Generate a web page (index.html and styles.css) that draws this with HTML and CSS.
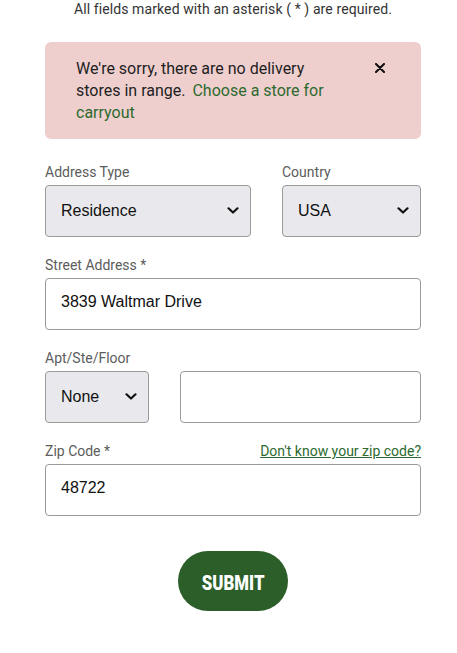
FILE: index.html
```html
<!DOCTYPE html>
<html lang="en">
<head>
<meta charset="utf-8">
<title>Delivery Address</title>
<link rel="stylesheet" href="styles.css">
</head>
<body>
<form class="form">
  <p class="note">All fields marked with an asterisk ( * ) are required.</p>

  <div class="alert">
    <p class="alert-text"><span>We're sorry, there are no delivery stores in range.</span> <a class="alert-link" href="#">Choose a store for carryout</a></p>
    <button type="button" class="alert-close" aria-label="Close">
      <svg width="10" height="10" viewBox="0 0 10 10"><path d="M1 1 L9 9 M9 1 L1 9" stroke="#111" stroke-width="2.1" stroke-linecap="round"/></svg>
    </button>
  </div>

  <div class="row row-60">
    <div class="field">
      <label class="label">Address Type</label>
      <div class="select"><span>Residence</span><svg class="chev" width="12" height="7" viewBox="0 0 12 7"><path d="M1.5 1.3 L6 5.5 L10.5 1.3" fill="none" stroke="#111" stroke-width="2.2" stroke-linecap="round" stroke-linejoin="round"/></svg></div>
    </div>
    <div class="field">
      <label class="label">Country</label>
      <div class="select"><span>USA</span><svg class="chev" width="12" height="7" viewBox="0 0 12 7"><path d="M1.5 1.3 L6 5.5 L10.5 1.3" fill="none" stroke="#111" stroke-width="2.2" stroke-linecap="round" stroke-linejoin="round"/></svg></div>
    </div>
  </div>

  <div class="field">
    <label class="label">Street Address *</label>
    <div class="input">3839 Waltmar Drive</div>
  </div>

  <div class="row row-30">
    <div class="field">
      <label class="label">Apt/Ste/Floor</label>
      <div class="select"><span>None</span><svg class="chev" width="12" height="7" viewBox="0 0 12 7"><path d="M1.5 1.3 L6 5.5 L10.5 1.3" fill="none" stroke="#111" stroke-width="2.2" stroke-linecap="round" stroke-linejoin="round"/></svg></div>
    </div>
    <div class="field">
      <label class="label">&nbsp;</label>
      <div class="input"></div>
    </div>
  </div>

  <div class="field">
    <div class="label-row">
      <label class="label">Zip Code *</label>
      <a class="zip-link" href="#">Don't know your zip code?</a>
    </div>
    <div class="input">48722</div>
  </div>

  <div class="actions">
    <button type="button" class="submit"><span class="submit-text">SUBMIT</span></button>
  </div>
</form>
</body>
</html>
```
FILE: styles.css
```css
* { box-sizing: border-box; }
html, body { margin: 0; padding: 0; background: #fff; }
body { font-family: Roboto, "Noto Sans", sans-serif; color: #222; }

.form {
  width: 376px;
  margin-left: 45px;
  display: flex;
  flex-direction: column;
}

.note {
  margin: 0;
  padding-top: 1px;
  height: 42px;
  text-align: center;
  font-size: 14px;
  line-height: 17px;
  color: #333;
  letter-spacing: 0.1px;
}

.alert {
  background: #efcfce;
  border-radius: 6px;
  height: 97px;
  padding: 16px 36px 0 31px;
  display: flex;
  justify-content: space-between;
  align-items: flex-start;
  margin-bottom: 24px;
}
.alert-text {
  margin: 0;
  width: 260px;
  font-size: 16px;
  line-height: 22px;
  color: #1e1e1e;
}
.alert-link { color: #2d6a2f; text-decoration: none; margin-left: 3px; }
.alert-close {
  border: 0;
  background: none;
  padding: 0;
  margin-top: 5px;
  width: 10px;
  height: 10px;
  display: flex;
}

.row { display: grid; column-gap: 31px; }
.row-60 { grid-template-columns: 206px 1fr; }
.row-30 { grid-template-columns: 104px 1fr; }

.field { display: flex; flex-direction: column; margin-bottom: 19px; }

.label {
  display: block;
  font-size: 14px;
  line-height: 18px;
  color: #5c5c5c;
  margin-bottom: 4px;
}
.label-row { display: flex; justify-content: space-between; align-items: baseline; }
.zip-link {
  font-size: 14px;
  line-height: 18px;
  color: #2d6a2f;
  text-decoration: underline;
}

.select, .input {
  height: 52px;
  border: 1px solid #9a9a9a;
  border-radius: 4px;
  display: flex;
  align-items: center;
  padding: 0 15px 4px;
  font-family: "Liberation Sans", Arial, sans-serif;
  font-size: 16px;
  color: #111;
}
.select {
  background: #e9e9ed;
  justify-content: space-between;
  padding: 0 11px 1px 15px;
}
.input { background: #fff; }
.chev { display: block; }

.actions { display: flex; justify-content: center; padding-top: 16px; }
.submit {
  width: 110px;
  height: 60px;
  border: 0;
  border-radius: 30px;
  background: #2c5e2a;
  color: #fff;
  display: flex;
  align-items: center;
  justify-content: center;
  padding: 0;
}
.submit-text {
  display: inline-block;
  font-family: Roboto, "Liberation Sans", sans-serif;
  font-weight: 900;
  font-size: 21px;
  transform: scaleX(0.8);
  margin-top: 4px;
}
```
